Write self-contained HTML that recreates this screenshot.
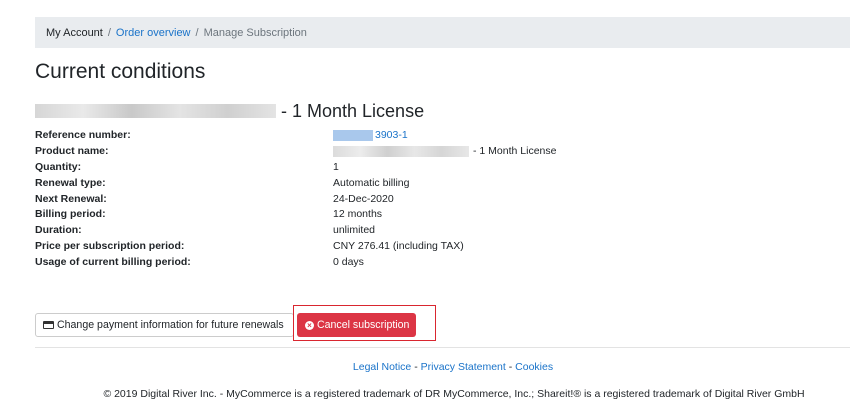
<!DOCTYPE html>
<html><head><style>
body{margin:0;width:850px;height:419px;background:#fff;font-family:"Liberation Sans",sans-serif;color:#212529;position:relative;overflow:hidden}
.a{position:absolute;white-space:nowrap}
.bc{left:35px;top:17px;width:815px;height:31px;background:#e9ecef;font-size:11px;line-height:32px;box-sizing:border-box;padding-left:11px;color:#212529}
.bc span.s{color:#6c757d;margin:0 5px}
.bc a{color:#1a73c9;text-decoration:none}
h1{position:absolute;left:35px;top:60px;margin:0;font-size:21px;font-weight:normal}
.blur{background:linear-gradient(90deg,#ccc,#e4e4e4 20%,#bbb 40%,#ddd 60%,#c4c4c4 80%,#ddd)}
.l{left:35px;font-size:10.5px;font-weight:bold}
.v{left:333px;font-size:10.5px}
.btn{height:24px;top:313px;box-sizing:border-box;font-size:10.6px;line-height:22px;border-radius:3px;overflow:hidden}
</style></head><body>
<div class="a bc">My Account<span class="s">/</span><a>Order overview</a><span class="s">/</span><span style="color:#6c757d">Manage Subscription</span></div>
<h1>Current conditions</h1>
<div class="a blur" style="left:35px;top:104px;width:241px;height:14px;opacity:.8"></div>
<div class="a" style="left:281px;top:101px;font-size:18px">- 1 Month License</div>
<div class="a l" style="top:129px">Reference number:</div>
<div class="a l" style="top:145px">Product name:</div>
<div class="a l" style="top:161px">Quantity:</div>
<div class="a l" style="top:177px">Renewal type:</div>
<div class="a l" style="top:193px">Next Renewal:</div>
<div class="a l" style="top:208px">Billing period:</div>
<div class="a l" style="top:224px">Duration:</div>
<div class="a l" style="top:240px">Price per subscription period:</div>
<div class="a l" style="top:256px">Usage of current billing period:</div>
<div class="a" style="left:333px;top:130px;width:40px;height:11px;background:#a9c8ec"></div>
<div class="a v" style="left:375px;top:129px;color:#1a73c9">3903-1</div>
<div class="a blur" style="left:333px;top:146px;width:136px;height:11px;opacity:.7"></div>
<div class="a v" style="left:473px;top:145px">- 1 Month License</div>
<div class="a v" style="top:161px">1</div>
<div class="a v" style="top:177px">Automatic billing</div>
<div class="a v" style="top:193px">24-Dec-2020</div>
<div class="a v" style="top:208px">12 months</div>
<div class="a v" style="top:224px">unlimited</div>
<div class="a v" style="top:240px">CNY 276.41 (including TAX)</div>
<div class="a v" style="top:256px">0 days</div>
<div class="a btn" style="left:35px;width:259px;border:1px solid #ccc;padding-left:7px"><span style="display:inline-block;width:11px;height:8px;border:1px solid #333;border-top-width:3px;box-sizing:border-box;vertical-align:-1px;margin-right:3px;border-radius:1px"></span>Change payment information for future renewals</div>
<div class="a" style="left:293px;top:305px;width:143px;height:36px;border:1px solid #d9262f;box-sizing:border-box"></div>
<div class="a btn" style="left:297px;width:119px;background:#dc3545;color:#fff;padding-left:8px;line-height:24px"><span style="display:inline-block;width:9px;height:9px;border-radius:50%;background:#fff;color:#dc3545;font-size:8px;line-height:9px;text-align:center;font-weight:bold;margin-right:3px">×</span>Cancel subscription</div>
<div class="a" style="left:35px;top:347px;width:815px;height:1px;background:#e3e3e3"></div>
<div class="a" style="left:0;width:906px;text-align:center;top:361px;font-size:10.5px;color:#1a73c9">Legal Notice <span style="color:#212529">-</span> Privacy Statement <span style="color:#212529">-</span> Cookies</div>
<div class="a" style="left:0;width:908px;text-align:center;top:388px;font-size:10.5px">© 2019 Digital River Inc. - MyCommerce is a registered trademark of DR MyCommerce, Inc.; Shareit!® is a registered trademark of Digital River GmbH</div>
</body></html>
